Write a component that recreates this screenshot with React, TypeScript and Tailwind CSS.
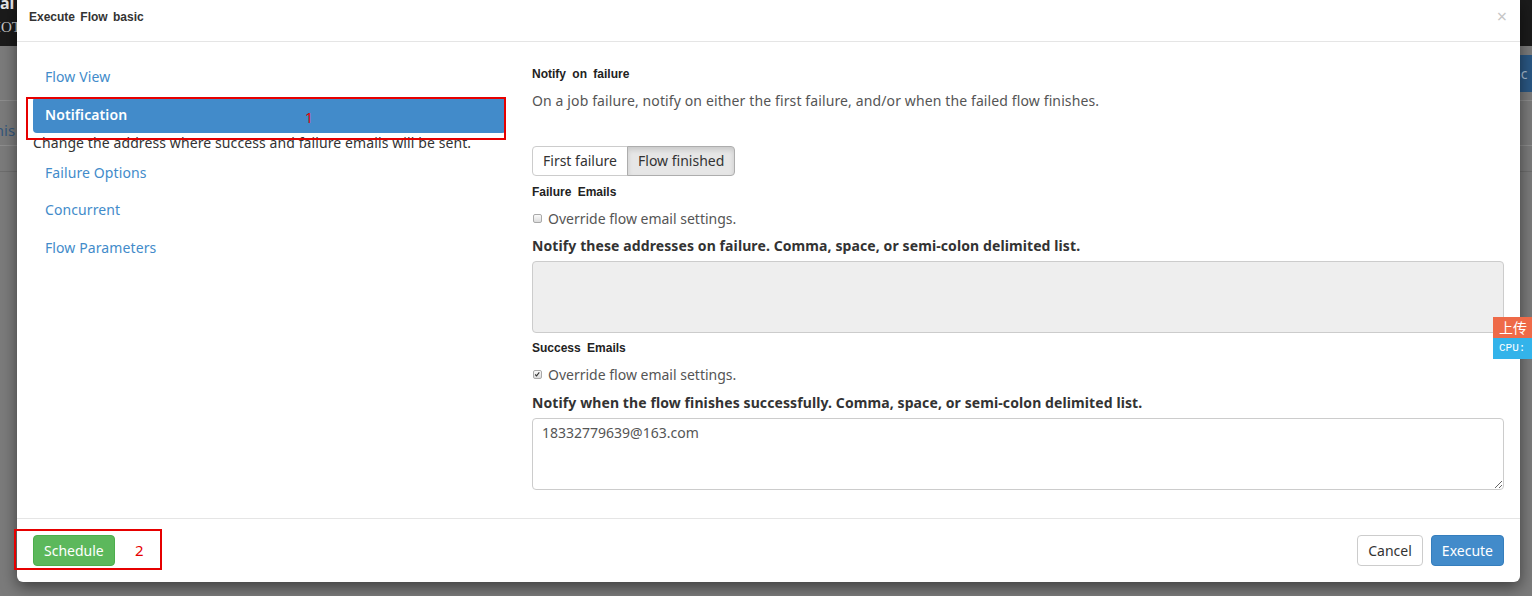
import React from "react";

const navItems = ["Flow View", "Notification", "Failure Options", "Concurrent", "Flow Parameters"];

function Check({ checked }: { checked?: boolean }) {
  return (
    <span className="relative inline-block h-[9px] w-[9px] rounded-[2px] border border-[#a9a9a9] bg-gradient-to-b from-[#fafafa] to-[#dcdcdc]">
      {checked && (
        <svg viewBox="0 0 9 9" className="absolute left-0 top-0 h-[7px] w-[7px]">
          <path d="M1.5 4.5 L3.3 6.3 L6.8 1.8" fill="none" stroke="#333" strokeWidth="1.4" />
        </svg>
      )}
    </span>
  );
}

function SubHead({ children, className = "" }: { children: React.ReactNode; className?: string }) {
  return (
    <div
      className={
        "text-[12px] leading-[16px] font-bold text-[#222] [word-spacing:3px] [font-family:'Liberation_Sans',Arial,sans-serif] " +
        className
      }
    >
      {children}
    </div>
  );
}

export default function App() {
  return (
    <div className="relative h-[596px] w-[1532px] overflow-hidden bg-[#7b7b7b] [font-family:'Noto_Sans',sans-serif]">
      {/* page behind the backdrop */}
      <div className="flex h-[46px] justify-between bg-[#1b1b1b]">
        <div className="flex flex-col text-[#d8d8d8]">
          <span className="-mt-[6px] text-[16px] font-bold leading-[18px] text-[#e6e6e6]">al</span>
          <span className="mt-[6px] -ml-[4px] text-[15px] leading-[18px] text-[#c9c9c9] [font-family:'Liberation_Serif',serif]">IOT</span>
        </div>
      </div>
      <div className="flex justify-between border-b border-[#8d8d8d] pt-[9px] pb-[8px]">
        <div />
        <div className="h-[37px] w-[20px] bg-[#2a5783] pl-[1px] text-[14px] leading-[37px] text-[#a9bfd6]">ac</div>
      </div>
      <div className="border-b border-[#8d8d8d] pt-[19px] pb-[5px] text-[15px] leading-[20px] text-[#33577c]">
        <span className="-ml-[10px]">mis</span>
      </div>
      <div className="h-[26px] border-b border-[#6d6d6d]" />

      {/* modal */}
      <div className="absolute left-[17px] top-0 w-[1503px] rounded-b-[6px] bg-white shadow-[0_5px_15px_rgba(0,0,0,0.5)]">
        <div className="flex h-[42px] justify-between border-b border-[#e5e5e5] pl-[12px] pr-[13px] pt-[9px]">
          <div className="text-[12px] font-bold leading-[16px] text-[#333] [word-spacing:2px] [font-family:'Liberation_Sans',Arial,sans-serif]">
            Execute Flow basic
          </div>
          <span className="-mt-[2px] text-[18px] leading-[18px] text-[#c6c6c6]">×</span>
        </div>

        <div className="flex px-[16px] pb-[28px]">
          <div className="w-[473px] pt-[17px] text-[14px]">
            {navItems.map((n, i) => (
              <React.Fragment key={n}>
                <div
                  className={
                    "h-[36px] rounded-[4px] px-[12px] leading-[36px] tracking-[0.1px] " +
                    (i === 0 ? "" : i === 3 ? "mt-[1px] " : "mt-[2px] ") +
                    (n === "Notification" ? "bg-[#428bca] font-semibold text-white" : "text-[#428bca]")
                  }
                >
                  {n}
                </div>
                {n === "Notification" && (
                  <div className="text-[14px] leading-[20px] tracking-[0.1px] text-[#333]">
                    Change the address where success and failure emails will be sent.
                  </div>
                )}
              </React.Fragment>
            ))}
          </div>

          <div className="ml-[26px] w-[972px] pt-[24px] text-[14px] text-[#555]">
            <SubHead>Notify on failure</SubHead>
            <p className="mt-[9px] leading-[20px] tracking-[0.12px]">
              On a job failure, notify on either the first failure, and/or when the failed flow finishes.
            </p>
            <div className="mt-[35px] flex h-[30px] w-fit text-[#333]">
              <button className="rounded-l-[4px] border border-[#ccc] bg-white px-[10px] leading-[28px]">First failure</button>
              <button className="-ml-px rounded-r-[4px] border border-[#adadad] bg-[#e6e6e6] px-[10px] leading-[28px] shadow-[inset_0_3px_5px_rgba(0,0,0,0.125)]">
                Flow finished
              </button>
            </div>

            <SubHead className="mt-[8px]">Failure Emails</SubHead>
            <label className="mt-[8px] flex h-[20px] items-center gap-[6px] pl-[1px]">
              <Check />
              <span>Override flow email settings.</span>
            </label>
            <div className="mt-[8px] font-bold leading-[20px] tracking-[0.1px] text-[#333]">
              Notify these addresses on failure. Comma, space, or semi-colon delimited list.
            </div>
            <textarea
              disabled
              className="mt-[5px] block h-[72px] w-full rounded-[4px] border border-[#ccc] bg-[#eee] px-[9px] pt-[5px] text-[14px] leading-[20px] text-[#555]"
            />

            <SubHead className="mt-[7px]">Success Emails</SubHead>
            <label className="mt-[8px] flex h-[20px] items-center gap-[6px] pl-[1px]">
              <Check checked />
              <span>Override flow email settings.</span>
            </label>
            <div className="mt-[9px] font-bold leading-[20px] tracking-[0.1px] text-[#333]">
              Notify when the flow finishes successfully. Comma, space, or semi-colon delimited list.
            </div>
            <textarea
              defaultValue="18332779639@163.com"
              className="mt-[5px] block h-[72px] w-full rounded-[4px] border border-[#ccc] bg-white px-[9px] pt-[4px] text-[14px] leading-[20px] text-[#555] outline-none"
            />
          </div>
        </div>

        <div className="flex items-center justify-between border-t border-[#e5e5e5] px-[16px] py-[16px] text-[14px]">
          <button className="h-[31px] rounded-[4px] border border-[#4cae4c] bg-[#5cb85c] px-[10px] leading-[28px] text-white">Schedule</button>
          <div className="flex gap-[8px]">
            <button className="h-[31px] rounded-[4px] border border-[#ccc] bg-white px-[10px] leading-[28px] text-[#333]">Cancel</button>
            <button className="h-[31px] rounded-[4px] border border-[#357ebd] bg-[#428bca] px-[10px] leading-[28px] text-white">Execute</button>
          </div>
        </div>
      </div>

      {/* floating monitor widget */}
      <div className="absolute left-[1493px] top-[317px] w-[50px]">
        <div className="h-[21px] bg-[#ee6a48] pl-[6px] text-[14px] leading-[21px] text-white [font-family:'Noto_Sans_CJK_SC',sans-serif]">上传</div>
        <div className="h-[21px] bg-[#33b3ea] pl-[6px] text-[11px] leading-[21px] text-white [font-family:'Liberation_Mono',monospace]">CPU:</div>
      </div>

      {/* annotations */}
      <div className="absolute left-[26px] top-[97px] h-[43px] w-[480px] border-2 border-[#e60000]" />
      <span className="absolute left-[305px] top-[109px] text-[14px] leading-[18px] text-[#e60000]">1</span>
      <div className="absolute left-[14px] top-[529px] h-[41px] w-[148px] border-2 border-[#e60000]" />
      <span className="absolute left-[135px] top-[541px] text-[15px] leading-[18px] text-[#e60000]">2</span>
    </div>
  );
}
